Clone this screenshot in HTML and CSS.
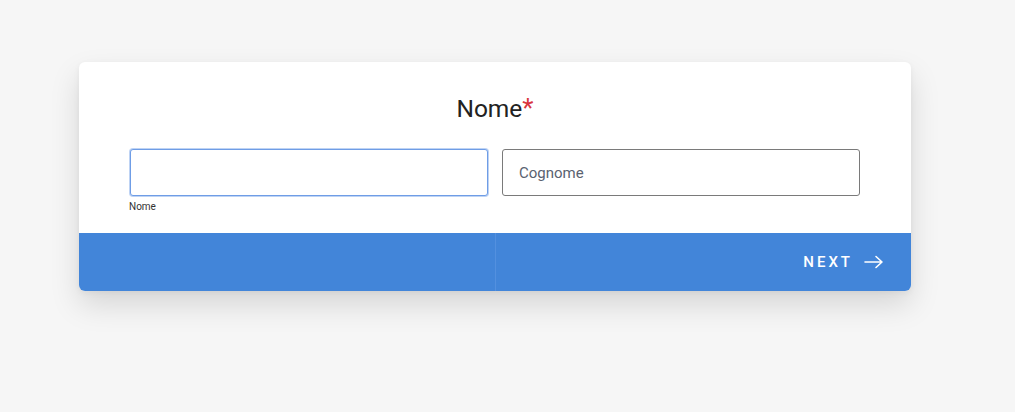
FILE: index.html
```html
<!DOCTYPE html>
<html lang="it">
<head>
<meta charset="utf-8">
<title>Nome</title>
<link rel="stylesheet" href="styles.css">
</head>
<body>
<div class="page">
  <form class="card">
    <div class="body">
      <h2 class="title">Nome<span class="req">*</span></h2>
      <div class="fields">
        <div class="field">
          <input class="input focused" type="text" aria-label="Nome">
          <div class="hint">Nome</div>
        </div>
        <div class="field">
          <input class="input" type="text" placeholder="Cognome">
        </div>
      </div>
    </div>
    <div class="footer">
      <div class="half"></div>
      <div class="half right">
        <button type="button" class="next">NEXT
          <svg width="20" height="14" viewBox="0 0 20 14" fill="none" stroke="#fff" stroke-width="1.6" stroke-linecap="round" stroke-linejoin="round"><path d="M1 7h17M12 1.5l6 5.5-6 5.5"/></svg>
        </button>
      </div>
    </div>
  </form>
</div>
</body>
</html>
```
FILE: styles.css
```css
html, body { margin: 0; padding: 0; }
body {
  background: #f6f6f6;
  font-family: Roboto, "Liberation Sans", Arial, sans-serif;
  width: 1015px;
  height: 412px;
  overflow: hidden;
}
.page {
  padding: 62px 0 0 79px;
}
.card {
  width: 832px;
  background: #fff;
  border-radius: 6px;
  box-shadow: 0 14px 30px rgba(0,0,0,0.13), 0 2px 6px rgba(0,0,0,0.05);
  overflow: hidden;
  margin: 0;
}
.body {
  padding: 30px 51px 0 51px;
  height: 171px;
  box-sizing: border-box;
}
.title {
  margin: 0;
  text-align: center;
  font-size: 24.5px;
  font-weight: 400;
  color: #222;
  line-height: 32px;
}
.req { color: #d9363e; font-size: 26px; }
.fields {
  display: flex;
  gap: 14px;
  margin-top: 24px;
}
.field { flex: 1; }
.input {
  display: block;
  width: 100%;
  box-sizing: border-box;
  height: 47px;
  border: 1px solid #7a7a7a;
  border-radius: 3px;
  padding: 0 16px;
  font-family: inherit;
  font-size: 15px;
  color: #333;
  outline: none;
  background: #fff;
}
.input::placeholder { color: #5a6270; }
.input.focused {
  border-color: #6f9de6;
  box-shadow: 0 0 0 1px rgba(111,157,230,0.45);
}
.hint {
  font-size: 10px;
  color: #333;
  margin-top: 5px;
  margin-left: -1px;
}
.footer {
  display: grid;
  grid-template-columns: 1fr 1fr;
  height: 58px;
  background: #4285d9;
}
.half.right {
  border-left: 1px solid #5390df;
  display: flex;
  justify-content: flex-end;
  align-items: center;
  padding-right: 27px;
}
.next {
  background: none;
  border: 0;
  color: #fff;
  font-family: inherit;
  font-size: 15px;
  font-weight: 500;
  letter-spacing: 3px;
  display: flex;
  align-items: center;
  gap: 11px;
  padding: 0;
  cursor: pointer;
}
```
